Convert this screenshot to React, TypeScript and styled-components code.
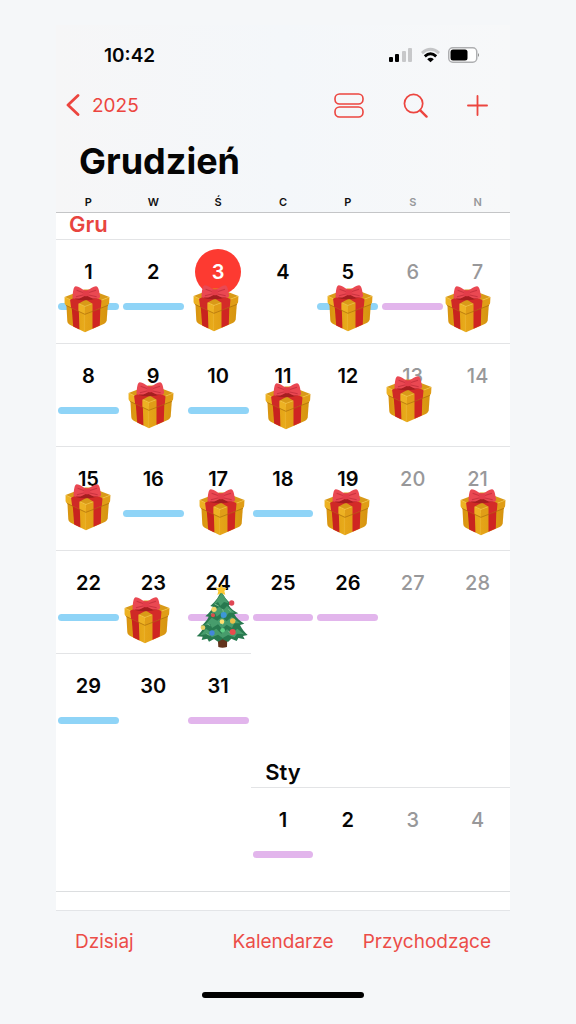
import React from 'react';
import styled, { createGlobalStyle } from 'styled-components';

const Global = createGlobalStyle`
  * { box-sizing: border-box; }
  body { margin: 0; background: #f5f7f9; font-family: Inter, "Noto Sans", sans-serif; color: #050505; }
  button { font: inherit; color: inherit; background: none; border: 0; padding: 0; cursor: pointer; }
`;

const Page = styled.div`
  min-height: 100vh;
  display: flex;
  padding: 25px 66px 0 56px;
`;
const Phone = styled.main`
  flex: 1;
  min-width: 0;
  display: flex;
  flex-direction: column;
`;
const Header = styled.header`
  background: linear-gradient(90deg, #f6f6f7, #f4f7fa 50%, #f7f8f9);
  border-bottom: 1px solid #c4c5c7;
`;
const StatusBar = styled.div`
  display: flex;
  justify-content: space-between;
  align-items: center;
  height: 60px;
  padding: 0 30px 0 48px;
`;
const Time = styled.time`
  font-size: 19px;
  font-weight: 600;
`;
const StatusIcons = styled.div`
  display: flex;
  align-items: center;
  gap: 8px;
`;
const NavBar = styled.nav`
  display: flex;
  justify-content: space-between;
  align-items: center;
  height: 40px;
  padding: 0 22px 0 10px;
  color: #ec453f;
`;
const BackButton = styled.button`
  display: flex;
  align-items: center;
  gap: 12px;
  font-size: 19px;
`;
const NavActions = styled.div`
  display: flex;
  align-items: center;
  gap: 39px;
`;
const IconButton = styled.button`
  display: flex;
`;
const Title = styled.h1`
  margin: 0;
  padding-left: 23px;
  font-size: 36px;
  line-height: 44px;
  padding-top: 14px;
  font-weight: 700;
`;
const Columns = styled.div`
  display: grid;
  grid-template-columns: repeat(7, minmax(0, 1fr));
`;
const WeekdayRow = styled(Columns)`
  padding-top: 12px;
  height: 29px;
  line-height: 14px;
  font-size: 11px;
  font-weight: 600;
  text-align: center;
`;
const Weekday = styled.span<{ $weekend: boolean }>`
  color: ${p => (p.$weekend ? '#97989b' : '#111')};
`;
const Calendar = styled.section`
  flex: 1;
  background: #fff;
`;
const MonthName = styled.h2<{ $column: number; $current?: boolean }>`
  grid-column: ${p => p.$column};
  margin: 0;
  text-align: center;
  font-size: 22px;
  line-height: ${p => (p.$current ? 22 : 30)}px;
  padding-bottom: ${p => (p.$current ? 4 : 0)}px;
  font-weight: 600;
  color: ${p => (p.$current ? '#e8453f' : '#050505')};
`;
const Weeks = styled(Columns)<{ $minHeight: number }>`
  grid-auto-rows: 1fr;
  min-height: ${p => p.$minHeight}px;
`;
const Cell = styled.div<{ $start?: number }>`
  position: relative;
  grid-column-start: ${p => p.$start ?? 'auto'};
  border-top: 1px solid #e3e4e6;
  padding: 9px 2px 0;
`;
const DayButton = styled.button<{ $weekend: boolean; $today: boolean }>`
  display: block;
  width: 46px;
  height: 46px;
  margin: 0 auto 8px;
  border-radius: 50%;
  font-size: 20px;
  line-height: 46px;
  font-weight: ${p => (p.$weekend ? 500 : 600)};
  color: ${p => (p.$today ? '#fff' : p.$weekend ? '#98989a' : '#050505')};
  background: ${p => (p.$today ? '#fd3a31' : 'transparent')};
`;
const EventBar = styled.div<{ $kind: 'blue' | 'violet' }>`
  height: 7px;
  border-radius: 4px;
  background: ${p => (p.$kind === 'blue' ? '#8fd4f7' : '#e2b5ec')};
`;
const Sticker = styled.span<{ $x: number; $y: number }>`
  position: absolute;
  z-index: 1;
  top: ${p => p.$y}px;
  left: calc(50% + ${p => p.$x}px);
  transform: translateX(-50%);
  pointer-events: none;
  svg { display: block; }
`;
const Gap = styled.div`
  height: 19px;
  border-top: 1px solid #dcdee0;
`;
const Footer = styled.footer`
  border-top: 1px solid #e3e5e8;
  background: #f5f7f9;
  height: 114px;
  display: flex;
  flex-direction: column;
  align-items: center;
  justify-content: space-between;
  padding-bottom: 26px;
`;
const Toolbar = styled.div`
  width: 100%;
  display: grid;
  grid-template-columns: 1fr auto 1fr;
  padding: 17px 19px 0;
  font-size: 19px;
  line-height: 28px;
  color: #ec4d48;
`;
const ToolButton = styled.button<{ $align?: string }>`
  justify-self: ${p => p.$align ?? 'center'};
`;
const HomeIndicator = styled.div`
  width: 162px;
  height: 6px;
  border-radius: 3px;
  background: #000;
`;

const Gift = () => (
  <svg width="46" height="47" viewBox="0 0 132 136" aria-hidden="true">
    <defs>
      <linearGradient id="giftL" x1="0" x2="1"><stop offset="0" stopColor="#d8930f" /><stop offset="1" stopColor="#e9ac1b" /></linearGradient>
      <linearGradient id="giftR" x1="0" x2="1"><stop offset="0" stopColor="#e6a518" /><stop offset="1" stopColor="#d69410" /></linearGradient>
    </defs>
    <path d="M6 46 60 70V134L16 112Q9 109 9 102Z" fill="url(#giftL)" />
    <path d="M60 70 127 46 123 100Q122 106 116 109L60 134Z" fill="url(#giftR)" />
    <path d="M21 52 42 62 44 126 26 117Z" fill="#c8231f" />
    <path d="M82 62 105 52 103 114 82 124Z" fill="#cf2522" />
    <path d="M1 32 58 10H74L131 32 60 60Z" fill="#d99a18" />
    <path d="M1 32 60 59V81L4 55Q1 53 1 48Z" fill="#edb223" />
    <path d="M60 59 131 32 130 49Q130 53 126 55L60 81Z" fill="#e09d17" />
    <path d="M3 33 60 59 129 33" fill="none" stroke="#f3c341" strokeWidth="2" />
    <path d="M5 56 60 82 127 56" fill="none" stroke="#ab6e0c" strokeWidth="2" />
    <path d="M17 40 50 24 76 32 41 51V73L20 63Z" fill="#cf2926" />
    <path d="M108 41 74 24 50 31 82 51V73L106 63Z" fill="#d42b28" />
    <path d="M26 36Q62 48 100 34L66 27Z" fill="#a61e20" />
    <path d="M60 13C50 9 42 1 34 1 26 2 26 16 24 32 24 37 28 38 33 36 43 38 52 33 60 28Z" fill="#ea4852" />
    <path d="M66 13C76 9 84 1 92 1 100 2 101 16 104 30 104 36 100 38 94 36 84 38 75 33 66 28Z" fill="#ea4852" />
    <path d="M58 20 36 12M67 20 92 12M57 25 34 31M68 25 94 31" fill="none" stroke="#cb3340" strokeWidth="3" />
    <rect x="54" y="12" width="18" height="18" rx="6" fill="#e23c49" />
  </svg>
);

const Tree = () => (
  <svg width="52" height="65" viewBox="0 0 156 195" aria-hidden="true">
    <path d="M65 155H94L93 189Q79 194 67 189Z" fill="#63341d" />
    <path d="M76 18C82 36 92 50 107 60L98 64C104 75 116 82 127 88L115 91C121 103 133 112 145 119L132 123C138 136 147 146 155 153L141 156 146 166 127 162 122 171 106 164 96 174 80 166 66 173 54 165 39 173 34 164 17 168 20 158 2 157C11 149 19 140 24 128L14 127C25 118 33 109 38 98L28 97C39 87 47 78 51 68L43 66C60 52 70 36 76 18Z" fill="#28794f" />
    <path d="M77 26 98 58 84 54 73 65 66 54 52 63ZM70 68 83 77 93 66 116 86 99 86 89 98 76 87 62 98 57 87 40 92ZM47 101 64 110 78 99 92 112 107 98 133 118 115 118 108 132 92 122 78 134 66 121 48 132 43 121 26 124ZM30 134 44 144 61 134 76 149 93 136 110 147 124 134 145 151 123 149 116 160 96 153 80 162 66 152 48 160 37 149 13 154Z" fill="#479c6c" />
    <path d="M56 60 68 66M97 76 104 82M45 89 56 94M112 107 120 111M34 120 43 125M80 75 82 84M80 114V123M97 142 105 148M31 149 41 154" stroke="#79bb8d" strokeWidth="3" />
    <path d="M76 0 81 11 93 12 85 21 88 33 76 27 64 33 67 21 59 12 71 11Z" fill="#fbc831" />
    <circle cx="107" cy="57" r="8" fill="#df4854" /><circle cx="54" cy="76" r="8" fill="#f1d66a" />
    <circle cx="83" cy="93" r="9" fill="#3d97d6" /><circle cx="78" cy="113" r="7" fill="#ffe072" />
    <circle cx="110" cy="111" r="8" fill="#ebbe49" /><circle cx="51" cy="94" r="6" fill="#dc4c4c" />
    <circle cx="21" cy="131" r="7" fill="#e7d169" /><circle cx="48" cy="147" r="8" fill="#4387db" />
    <circle cx="110" cy="144" r="9" fill="#e94c4d" /><circle cx="80" cy="139" r="7" fill="#60cf87" />
  </svg>
);

type Kind = 'blue' | 'violet';
type Mark = { bar?: Kind; sticker?: 'gift' | 'tree'; x?: number; y?: number };

const december: Record<number, Mark> = {
  1: { bar: 'blue', sticker: 'gift', x: -1, y: 46 },
  2: { bar: 'blue' },
  3: { sticker: 'gift', x: -2, y: 45 },
  5: { bar: 'blue', sticker: 'gift', x: 2, y: 45 },
  6: { bar: 'violet' },
  7: { sticker: 'gift', x: -10, y: 46 },
  8: { bar: 'blue' },
  9: { sticker: 'gift', x: -2, y: 38 },
  10: { bar: 'blue' },
  11: { sticker: 'gift', x: 5, y: 39 },
  13: { sticker: 'gift', x: -4, y: 32 },
  15: { sticker: 'gift', x: 0, y: 37 },
  16: { bar: 'blue' },
  17: { sticker: 'gift', x: 4, y: 42 },
  18: { bar: 'blue' },
  19: { sticker: 'gift', x: -1, y: 42 },
  21: { sticker: 'gift', x: 5, y: 42 },
  22: { bar: 'blue' },
  23: { sticker: 'gift', x: -6, y: 46 },
  24: { bar: 'violet', sticker: 'tree', x: 4, y: 33 },
  25: { bar: 'violet' },
  26: { bar: 'violet' },
  29: { bar: 'blue' },
  31: { bar: 'violet' },
};

const Day = ({ day, column, mark = {}, today = false, start }: { day: number; column: number; mark?: Mark; today?: boolean; start?: number }) => (
  <Cell $start={start}>
    <DayButton $weekend={column > 4} $today={today}>{day}</DayButton>
    {mark.bar && <EventBar $kind={mark.bar} />}
    {mark.sticker && (
      <Sticker $x={mark.x ?? 0} $y={mark.y ?? 0}>{mark.sticker === 'gift' ? <Gift /> : <Tree />}</Sticker>
    )}
  </Cell>
);

export default function App() {
  return (
    <Page>
      <Global />
      <Phone>
        <Header>
          <StatusBar>
            <Time>10:42</Time>
            <StatusIcons>
              <svg width="24" height="16" viewBox="0 0 24 16" aria-hidden="true">
                <rect x="0" y="10" width="4" height="5" rx="1" /><rect x="6" y="7" width="4" height="8" rx="1" />
                <rect x="13" y="4" width="4" height="11" rx="1" fill="#c7c8ca" /><rect x="19" y="1" width="4" height="14" rx="1" fill="#c7c8ca" />
              </svg>
              <svg width="19" height="16" viewBox="0 0 20 16" fill="none" aria-hidden="true">
                <path d="M1 6Q10-2 19 6" stroke="#c4c5c7" strokeWidth="3" />
                <path d="M4 9.500Q10 4 16 9.500" stroke="#000" strokeWidth="3" />
                <path d="M6.500 12.500Q10 9.500 13.500 12.500L10 15.500Z" fill="#000" />
              </svg>
              <svg width="32" height="16" viewBox="0 0 32 16" aria-hidden="true">
                <rect x=".75" y=".75" width="28" height="14.500" rx="4" fill="#fff" stroke="#aeafb1" strokeWidth="1.500" />
                <rect x="2.500" y="2.500" width="17" height="11" rx="2.500" /><path d="M30 6Q32 8 30 10Z" fill="#888" />
              </svg>
            </StatusIcons>
          </StatusBar>
          <NavBar>
            <BackButton>
              <svg width="14" height="22" viewBox="0 0 14 22" fill="none" stroke="currentColor" strokeWidth="2.800" strokeLinecap="round" strokeLinejoin="round" aria-hidden="true"><path d="M12 1.500 2 11 12 20.500" /></svg>
              2025
            </BackButton>
            <NavActions>
              <IconButton aria-label="Widok">
                <svg width="30" height="25" viewBox="0 0 30 25" fill="none" stroke="currentColor" strokeWidth="1.600" aria-hidden="true"><rect x="1" y="1" width="28" height="10" rx="4.500" /><rect x="1" y="14" width="28" height="10" rx="4.500" /></svg>
              </IconButton>
              <IconButton aria-label="Szukaj">
                <svg width="25" height="25" viewBox="0 0 26 26" fill="none" stroke="currentColor" strokeLinecap="round" aria-hidden="true"><circle cx="11" cy="11" r="9.500" strokeWidth="1.800" /><path d="m18 18 6.500 6.500" strokeWidth="2.500" /></svg>
              </IconButton>
              <IconButton aria-label="Dodaj">
                <svg width="21" height="21" viewBox="0 0 22 22" fill="none" stroke="currentColor" strokeWidth="1.900" strokeLinecap="round" aria-hidden="true"><path d="M11 1V21M1 11H21" /></svg>
              </IconButton>
            </NavActions>
          </NavBar>
          <Title>Grudzień</Title>
          <WeekdayRow>
            {['P', 'W', 'Ś', 'C', 'P', 'S', 'N'].map((d, i) => <Weekday key={i} $weekend={i > 4}>{d}</Weekday>)}
          </WeekdayRow>
        </Header>
        <Calendar>
          <Columns><MonthName $column={1} $current>Gru</MonthName></Columns>
          <Weeks $minHeight={518}>
            {Array.from({ length: 31 }, (_, i) => (
              <Day key={i} day={i + 1} column={i % 7} mark={december[i + 1]} today={i === 2} />
            ))}
          </Weeks>
          <Columns><MonthName $column={4}>Sty</MonthName></Columns>
          <Weeks $minHeight={104}>
            {[1, 2, 3, 4].map(d => (
              <Day key={d} day={d} column={d + 2} start={d === 1 ? 4 : undefined} mark={d === 1 ? { bar: 'violet' } : undefined} />
            ))}
          </Weeks>
          <Gap />
        </Calendar>
        <Footer>
          <Toolbar>
            <ToolButton $align="start">Dzisiaj</ToolButton>
            <ToolButton>Kalendarze</ToolButton>
            <ToolButton $align="end">Przychodzące</ToolButton>
          </Toolbar>
          <HomeIndicator />
        </Footer>
      </Phone>
    </Page>
  );
}
